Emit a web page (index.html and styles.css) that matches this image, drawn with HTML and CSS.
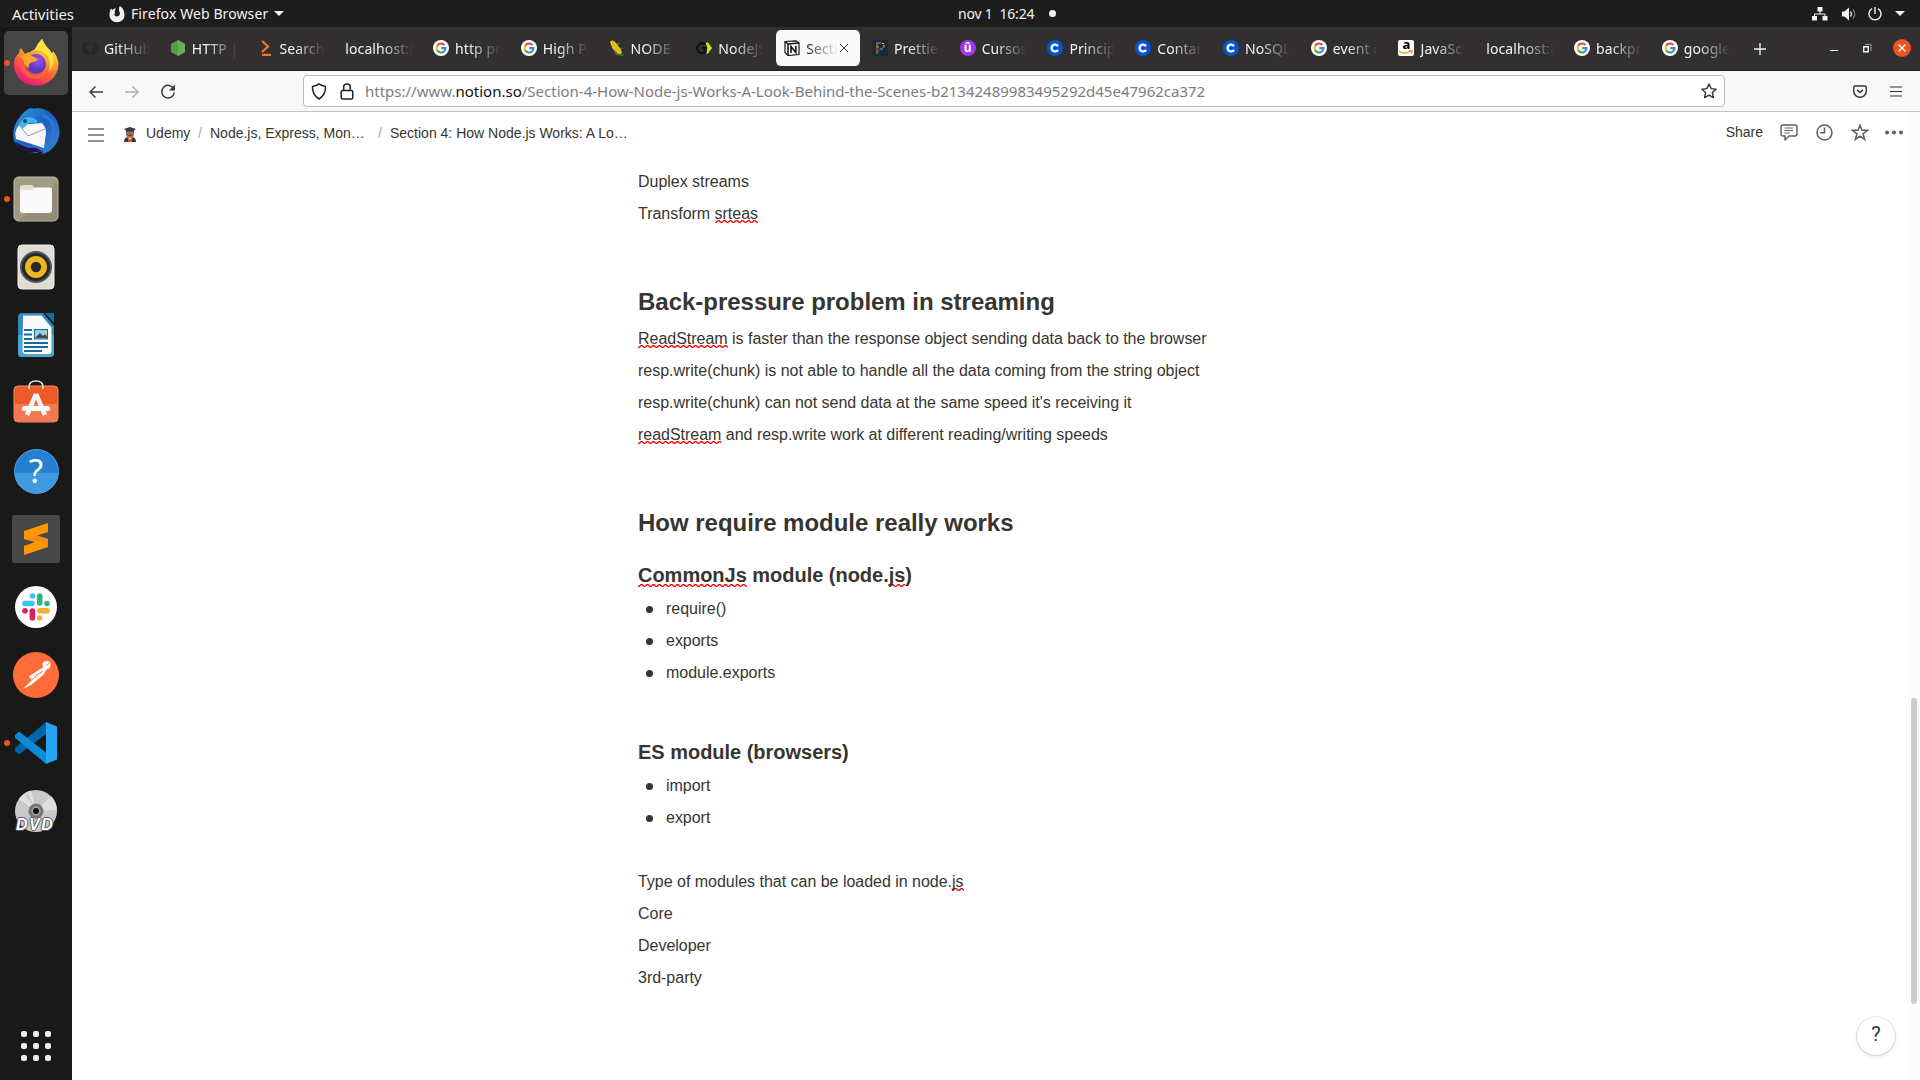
FILE: index.html
```html
<!DOCTYPE html>
<html lang="en">
<head>
<meta charset="utf-8">
<title>Section 4: How Node.js Works</title>
<link rel="stylesheet" href="styles.css">
</head>
<body>
<svg class="defs" width="0" height="0">
  <symbol id="google" viewBox="0 0 16 16"><circle cx="8" cy="8" r="8" fill="#fff"/><g fill="none" stroke-width="2.1"><path d="M4.2 5.7A4.5 4.5 0 0 1 11.3 4.9" stroke="#ea4335"/><path d="M4.2 10.3A4.5 4.5 0 0 1 4.2 5.7" stroke="#fbbc05"/><path d="M11 11.4A4.5 4.5 0 0 1 4.2 10.3" stroke="#34a853"/><path d="M8.2 8.1H12.5A4.5 4.5 0 0 1 11 11.4" stroke="#4285f4"/></g></symbol>
  <symbol id="coursera" viewBox="0 0 16 16"><circle cx="8" cy="8" r="8" fill="#0056d2"/><path d="M10.900 6.300A3.400 3.400 0 1 0 10.900 9.800" fill="none" stroke="#fff" stroke-width="2.3"/></symbol>
</svg>

<header class="topbar">
  <div class="top-left">
    <span class="activities">Activities</span>
    <svg width="16" height="18" viewBox="0 0 16 18"><path d="M2 3.5 3.5 5C5 3.6 6.4 3.4 7 3.8 5.6 5 5.2 7 6.2 7.4 5 8.400 5 11 7.800 11.500 10.500 11.500 11.500 9 10.500 6.800 9.800 5.300 9.500 3 11 1 13.500 3 15.500 5.500 15.500 10 15.500 14.500 12 17.200 8 17.200 3.500 17.200.5 14 .5 10 .5 7 1 5 2 3.500Z" fill="#f2f2f2"/></svg>
    <span class="app-name">Firefox Web Browser</span>
    <i class="caret"></i>
  </div>
  <div class="top-clock"><span>nov 1&nbsp; 16:24</span><i class="notice"></i></div>
  <div class="top-right">
    <svg width="16" height="14" viewBox="0 0 16 14" fill="#f2f2f2"><path d="M5.500 0h5v4.500h-5zM0 9h5v4.500H0zM10.500 9h5v4.500h-5z"/><path d="M8 4v3M2.500 9.500V7h10.500v2.500" fill="none" stroke="#f2f2f2"/></svg>
    <svg width="16" height="14" viewBox="0 0 16 14"><path d="M1 4.500h2.500L8 .500v13L3.500 9.500H1z" fill="#f2f2f2"/><path d="M9.500 4.500q2 2.500 0 5" fill="none" stroke="#ddd" stroke-width="1.300"/><path d="M12 2.500q3.500 4.500 0 9" fill="none" stroke="#777" stroke-width="1.300"/></svg>
    <svg width="14" height="14" viewBox="0 0 14 14" fill="none" stroke="#f2f2f2" stroke-width="1.400"><path d="M4 1.700a6 6 0 1 0 6 0M7 0v7"/></svg>
    <i class="caret"></i>
  </div>
</header>

<div class="desktop">
  <nav class="dock">
    <div class="dock-item focused running">
      <svg width="46" height="48" viewBox="0 0 46 48">
        <defs><linearGradient id="ff" x1=".8" y1="0" x2=".3" y2="1"><stop offset="0" stop-color="#fff44f"/><stop offset=".35" stop-color="#ffb02e"/><stop offset=".65" stop-color="#ff5a36"/><stop offset="1" stop-color="#e31587"/></linearGradient><radialGradient id="ffp" cx=".6" cy=".3"><stop offset="0" stop-color="#a04df5"/><stop offset="1" stop-color="#5a3bc0"/></radialGradient></defs>
        <path d="M8 9 12 15Q14 13 17 13L22 10Q24 5 29 0 31 6 36 10 38 12 39 15L40 12Q45 18 45.500 25C45 38 35 46.500 23 46.500S1 38 1 25Q1 18 6 14Q6 11 8 9Z" fill="url(#ff)"/>
        <path d="M10 24Q11 34 22 36 33 36 36 27 36 37 25 40 12 40 8 30Z" fill="#ff6b32" opacity=".65"/>
        <circle cx="23" cy="25" r="10" fill="url(#ffp)"/>
        <path d="M7 17Q14 13 19 17L25 20Q23 23 18 23.500 15 25 16 29 11 27 11 22Z" fill="#ffa529"/><path d="M22 11Q31 11 35 18 39 26 35 33 43 26 40 15 35 11 29 0 24 5 22 11Z" fill="#ffe044"/>
      </svg>
    </div>
    <div class="dock-item">
      <svg width="48" height="48" viewBox="0 0 48 48">
        <defs><linearGradient id="tb" x1="0" y1="0" x2="1" y2="1"><stop offset="0" stop-color="#2f9be0"/><stop offset=".5" stop-color="#1c5fbd"/><stop offset="1" stop-color="#3989d8"/></linearGradient></defs>
        <path d="M18 1Q22 2 25 1C39 2 47 12 47.500 24 48 36 39 45 30 47L31 44 24 46Q8 45 2 34 -1 20 8 10Q12 4 18 1Z" fill="url(#tb)"/>
        <path d="M3 34Q12 42 24 41L30 44Q10 49 3 34Z" fill="#20104d"/>
        <path d="M7 18 30 16Q34 20 34 26L32 41 4 32Q2 24 7 18Z" fill="#f8f8fa"/><path d="M7 18 16 29 33 22" fill="none" stroke="#9b9ba0"/>
        <path d="M7 17Q12 8 21 11 28 14 24 16 17 14 14 19L10 22Z" fill="#42b8ee"/><circle cx="13" cy="14" r="2" fill="#174377"/><path d="M30 8Q42 12 42 24 41 34 34 42" fill="none" stroke="#2d78d0" stroke-width="3"/>
      </svg>
    </div>
    <div class="dock-item running">
      <svg width="46" height="46" viewBox="0 0 46 46"><rect x="1" y="1" width="44" height="44" rx="4.500" fill="#a29b84" stroke="#c5bfa9"/><path d="M44.500 6 6 44.500H40a4.500 4.500 0 0 0 4.500-4.500z" fill="#948d77"/><path d="M7 12q0-3 3-3h9l3 3h5v8H7z" fill="#e2ded2"/><path d="M7 16q0-2 2-2h10l3-2.500h15q2 0 2 2V34q0 3-3 3H10q-3 0-3-3z" fill="#fafafa"/></svg>
    </div>
    <div class="dock-item">
      <svg width="38" height="46" viewBox="0 0 38 46"><rect x="1" y="1" width="36" height="44" rx="4" fill="#e2ddd3" stroke="#f1eee8"/><circle cx="19" cy="23" r="16" fill="#535560"/><circle cx="19" cy="23" r="14" fill="#24262e"/><circle cx="19" cy="23" r="11" fill="#ecb719"/><circle cx="19" cy="23" r="5.200" fill="#282828"/></svg>
    </div>
    <div class="dock-item">
      <svg width="38" height="46" viewBox="0 0 38 46"><path d="M5 1h21l11 13v27q0 4-4 4H5q-4 0-4-4V5q0-4 4-4z" fill="#3488bb"/><path d="M1 23h36v18q0 4-4 4H5q-4 0-4-4z" fill="#4ba4d2"/><path d="M6 3.500h18.500l10 12V39q0 3-3 3h-22q-4 0-4-3z" fill="#fafafa"/><path d="M28 1h9v10z" fill="#146c9f"/><path d="M7 18h8M7 22.500h8M7 27h8M7 31h24M7 35h24M7 39h18" stroke="#1769a0" stroke-width="1.800"/><rect x="17.500" y="17.500" width="13" height="9.500" fill="#8bd2f2" stroke="#1769a0"/><path d="m18 26 5-5 3 3 2-2 3 4z" fill="#444"/><circle cx="28" cy="20" r="1.500" fill="#e5c84e"/></svg>
    </div>
    <div class="dock-item">
      <svg class="software" width="46" height="46" viewBox="0 0 46 46"><rect x="1" y="8" width="44" height="36" rx="4" fill="#ef5a27" stroke="#f48b66"/><path d="M1 26h44v14q0 4-4 4H5q-4 0-4-4z" fill="#f27a50"/><path d="M16 11V9q0-6 7-6t7 6v2" fill="none" stroke="#eee1bc" stroke-width="1.600"/><path d="M23 16 14 37M23 16l9 21" stroke="#faf4f0" stroke-width="4.600"/><rect x="9" y="28" width="28" height="5" rx="2.500" fill="#fff"/></svg>
    </div>
    <div class="dock-item"><div class="help-app">?</div></div>
    <div class="dock-item">
      <svg width="48" height="48" viewBox="0 0 48 48"><rect width="48" height="48" rx="2.500" fill="#484848"/><path d="M12 16 36 8v9l-11 3.500L36 24v8L12 40v-9l11-4-11-3z" fill="#ff9800"/><path d="m12 24 11 3 4-1.500L36 32V24l-11-3.500z" fill="#f28b13"/></svg>
    </div>
    <div class="dock-item">
      <svg width="42" height="42" viewBox="0 0 42 42"><circle cx="21" cy="21" r="21" fill="#fff"/><g stroke-width="5.600" stroke-linecap="round"><path d="M10 17.500h7M17.500 10h.01" stroke="#36c5f0"/><path d="M24.700 10v7M32 17.500h.01" stroke="#2eb67d"/><path d="M25 24.700h7M24.700 32h.01" stroke="#ecb22e"/><path d="M17.400 25v7M10 24.700h.01" stroke="#e01e5a"/></g></svg>
    </div>
    <div class="dock-item">
      <svg width="46" height="46" viewBox="0 0 46 46"><circle cx="23" cy="23" r="23" fill="#ff6c37"/><circle cx="33.500" cy="13" r="4" fill="#fff"/><path d="M31 15 19 23l-1 3 12-8zM32 18 19 28 10 37l8-4 11-9q4-4 3-6z" fill="#fff"/><path d="M17 26 33 16" stroke="#fff" stroke-width="4"/><path d="m21 25 9-6" stroke="#ff6c37"/><path d="m33.500 13 3-2" stroke="#ff6c37"/></svg>
    </div>
    <div class="dock-item running">
      <svg width="42" height="42" viewBox="0 0 42 42"><path d="M31 0 0 26v3l4 3.500L31 12z" fill="#0065a9"/><path d="m4 9.500-4 3.800v2.500L31 42V30.500z" fill="#0b8bd7"/><path d="m31 0 11 4.500v33L31 42z" fill="#24a5f5"/></svg>
    </div>
    <div class="dock-item">
      <div class="dvd"><svg width="42" height="42" viewBox="0 0 42 42"><circle cx="21" cy="21" r="21" fill="#c9c9c9"/><path d="M21 21 4 9A21 21 0 0 1 16 .5z" fill="#e5dfe6"/><path d="M21 21 9 4l4-2z" fill="#dcc7dc"/><path d="m21 21 15-15a21 21 0 0 1 6 14z" fill="#dedede"/><circle cx="21" cy="21" r="7.500" fill="#777"/><circle cx="21" cy="21" r="4.500" fill="#a2a2a2"/><circle cx="21" cy="21" r="3" fill="#111"/></svg><b>DVD</b></div>
    </div>
    <div class="apps-grid"><i></i><i></i><i></i><i></i><i></i><i></i><i></i><i></i><i></i></div>
  </nav>

  <main class="browser">
    <div class="tabstrip">
      <div class="tab"><svg class="fav" viewBox="0 0 16 16"><path d="M6 15v-3Q3 12.500 2.500 10.500M6 12Q3 11 3 8 3 6 4 5V3l2 1q2-.5 4 0l2-1v2q1 1 1 3 0 3-3 4v3M4 2A7.300 7.300 0 0 0 5 14.500M11 14.500A7.300 7.300 0 0 0 12 2" fill="none" stroke="#24292e" stroke-width="1.800"/></svg><span>GitHub</span></div>
      <div class="tab"><svg class="fav" viewBox="0 0 16 16"><path d="m8 0 7 4v8l-7 4-7-4V4z" fill="#539e43"/><path d="m8 0 7 4v8L8 16z" fill="#6cad57"/></svg><span>HTTP |</span></div>
      <div class="tab"><svg class="fav" viewBox="0 0 16 16"><path d="m4 1 6 5.500-6 5.500M4 15h9" stroke="#f37626" stroke-width="2.300" fill="none"/></svg><span>Search</span></div>
      <div class="tab"><span>localhost:8</span></div>
      <div class="tab"><svg class="fav"><use href="#google"/></svg><span>http pr</span></div>
      <div class="tab"><svg class="fav"><use href="#google"/></svg><span>High Pe</span></div>
      <div class="tab"><svg class="fav" viewBox="0 0 16 16"><path d="M1 5Q5 10 7 15l8 1-4-5 3-3-5-1 2-5-5 2z" fill="#467b25"/><path d="M1 2Q3-1 6 2l6 8q2 4-2 4L4 9z" fill="#f4c32c"/><path d="m3 2 8 10M2 5l6 6" stroke="#cb8d12" stroke-width=".7"/></svg><span>NODE</span></div>
      <div class="tab"><svg class="fav" viewBox="0 0 16 16"><path d="M9.500 2.500h2.500L16 8l-4 5.500H9.500L11.500 8z" fill="#c6e72c"/><path d="M9 4A5 5 0 1 0 9.500 12V8H6" fill="none" stroke="#111" stroke-width="2.300"/></svg><span>NodeJS</span></div>
      <div class="tab active"><svg class="fav" viewBox="0 0 16 16"><path d="M1 1.500 12 .8 15 3v11.500l-11 1L1 12.500z" fill="#fff" stroke="#111" stroke-width="1.200"/><path d="M1 1.500 4 4l11-1M4 4v11" stroke="#111" fill="none" stroke-width="1.500"/><path d="M7 13V6.500l4.800 6V5.800" stroke="#111" fill="none" stroke-width="1.600"/></svg><span>Secti</span><svg class="tab-close" viewBox="0 0 10 10"><path d="m1 1 8 8M9 1 1 9" stroke="#333"/></svg></div>
      <div class="tab"><svg class="fav" viewBox="0 0 16 16"><rect width="16" height="16" rx="1" fill="#1a2b34"/><path d="M4 3h5M4 5h2" stroke="#c188c1" stroke-width="1.200"/><path d="M10 3.500h2M4 7h3" stroke="#f7ba3e" stroke-width="1.200"/><path d="M11 5.500h2M7.500 9H11" stroke="#56b3b4" stroke-width="1.200"/><path d="M4 9h2M4 11h3M10.500 7H13" stroke="#ea5e5e" stroke-width="1.200"/><path d="M4 13h2" stroke="#56b3b4"/></svg><span>Prettie</span></div>
      <div class="tab"><b class="fav udemy">û</b><span>Cursos</span></div>
      <div class="tab"><svg class="fav"><use href="#coursera"/></svg><span>Princip</span></div>
      <div class="tab"><svg class="fav"><use href="#coursera"/></svg><span>Contai</span></div>
      <div class="tab"><svg class="fav"><use href="#coursera"/></svg><span>NoSQL</span></div>
      <div class="tab"><svg class="fav"><use href="#google"/></svg><span>event c</span></div>
      <div class="tab"><b class="fav amazon">a<svg viewBox="0 0 16 5"><path d="M1 1q6 4 12 0M11 .5l3 0-.5 3" fill="none" stroke="#f90" stroke-width="1.500"/></svg></b><span>JavaSc</span></div>
      <div class="tab"><span>localhost:8</span></div>
      <div class="tab"><svg class="fav"><use href="#google"/></svg><span>backpr</span></div>
      <div class="tab"><svg class="fav"><use href="#google"/></svg><span>google</span></div>
      <svg class="new-tab" width="12" height="12" viewBox="0 0 12 12"><path d="M6 0v12M0 6h12" stroke="#f5f5f5" stroke-width="1.300"/></svg>
      <div class="window-buttons">
        <svg width="8" height="12" viewBox="0 0 8 12"><path d="M0 8.500h8" stroke="#fff"/></svg>
        <svg width="9" height="9" viewBox="0 0 9 9" fill="none"><path d="M.750 2.750h4.500v5h-4.500z" stroke="#fff" stroke-width="1.300"/><path d="M2 .500h6V7" stroke="#9a9a9a"/></svg>
        <i class="close"><svg width="8" height="8" viewBox="0 0 8 8"><path d="m.5.5 7 7M7.500.5l-7 7" stroke="#fff" stroke-width="1.300"/></svg></i>
      </div>
    </div>

    <div class="toolbar">
      <div class="nav-buttons">
        <svg width="14" height="12" viewBox="0 0 14 12"><path d="M14 6H1M6.500.500 1 6l5.500 5.500" fill="none" stroke="#3a3a3f" stroke-width="1.400"/></svg>
        <svg width="14" height="12" viewBox="0 0 14 12"><path d="M0 6h13M7.500.500 13 6l-5.500 5.500" fill="none" stroke="#adadad" stroke-width="1.400"/></svg>
        <svg width="16" height="16" viewBox="0 0 16 16"><path d="M13.500 4.500A6.300 6.300 0 1 0 14.300 8.500" fill="none" stroke="#3a3a3f" stroke-width="1.500"/><path d="M15 .500V6.500H9z" fill="#3a3a3f"/></svg>
      </div>
      <div class="urlbar">
        <svg width="16" height="17" viewBox="0 0 16 17"><path d="M8 1Q11 2.700 14.500 3.500q.5 8-6.500 12.500Q1 11.500 1.500 3.500 5 2.700 8 1z" fill="none" stroke="#222" stroke-width="1.500" stroke-linejoin="round"/></svg>
        <svg width="14" height="17" viewBox="0 0 14 17" fill="none" stroke="#222" stroke-width="1.500"><rect x="1.200" y="7.500" width="11.600" height="8.500" rx="1.500"/><path d="M3.700 7.500V4q0-3 3.300-3t3.300 3v3.500"/></svg>
        <span class="url">https://www.<em>notion.so</em>/Section-4-How-Node-js-Works-A-Look-Behind-the-Scenes-b21342489983495292d45e47962ca372</span>
        <svg width="16" height="16" viewBox="0 0 16 16"><path d="m8 1 2.100 4.600 5 .6-3.700 3.400 1 5L8 12.100l-4.400 2.500 1-5L.9 6.200l5-.6z" fill="none" stroke="#333" stroke-width="1.400" stroke-linejoin="round"/></svg>
      </div>
      <div class="tool-right">
        <svg width="14" height="13" viewBox="0 0 14 13" fill="none" stroke="#333" stroke-width="1.400"><path d="M2.200 1h9.600q1.500 0 1.500 1.500V6a6.300 6.300 0 0 1-12.600 0V2.500Q.700 1 2.200 1zM4 4.700l3 2.800 3-2.800"/></svg>
        <svg width="12" height="11" viewBox="0 0 12 11"><path d="M0 1h12M0 5.500h12M0 10h12" stroke="#333" stroke-width="1.200"/></svg>
      </div>
    </div>

    <section class="page">
      <div class="notion-bar">
        <svg class="menu" width="16" height="14" viewBox="0 0 16 14"><path d="M0 1h16M0 7h16M0 13h16" stroke="#6b6a67" stroke-width="1.700"/></svg>
        <svg class="student" width="12" height="15" viewBox="0 0 12 15"><path d="M2 4h8v4q-1 3-4 3T2 8z" fill="#9c6b48"/><path d="m6 0 6 2-2 1.500v1H2v-1L0 2zM0 15q0-4 3-5l3 3 3-3q3 1 3 5z" fill="#35393d"/><path d="M4 10.500 6 13l2-2.500V15H4z" fill="#e0522e"/><path d="M4.500 8.500h3" stroke="#5d321d"/></svg>
        <span class="crumb c1">Udemy</span><span class="slash">/</span>
        <span class="crumb c2">Node.js, Express, Mon…</span><span class="slash">/</span>
        <span class="crumb">Section 4: How Node.js Works: A Lo…</span>
        <div class="page-actions">
          <span>Share</span>
          <svg width="18" height="17" viewBox="0 0 18 17" fill="none" stroke="#5f5e5b" stroke-width="1.400"><path d="M3 1h12q2 0 2 2v7q0 2-2 2H9l-4 4v-4H3q-2 0-2-2V3q0-2 2-2z" stroke-linejoin="round"/><path d="M4.500 4h8.500M4.500 6.500h8.500M4.500 9h5.500" stroke-width="1"/></svg>
          <svg width="17" height="17" viewBox="0 0 17 17" fill="none" stroke="#5f5e5b" stroke-width="1.500"><circle cx="8.500" cy="8.500" r="7.500"/><path d="M8.500 3.500v5.200H4.200"/></svg>
          <svg width="18" height="17" viewBox="0 0 18 17"><path d="m9 1.300 1.900 5h5.600l-4.500 3.500 1.700 5.700L9 12.200l-4.700 3.300L6 9.800 1.500 6.300h5.600z" fill="none" stroke="#5f5e5b" stroke-width="1.500"/></svg>
          <svg width="18" height="5" viewBox="0 0 18 5" fill="#5f5e5b"><circle cx="2" cy="2.500" r="2"/><circle cx="9" cy="2.500" r="2"/><circle cx="16" cy="2.500" r="2"/></svg>
        </div>
      </div>
      <article class="doc">
        <p>Duplex streams</p>
        <p>Transform <u>srteas</u></p>
        <p></p>
        <h2>Back-pressure problem in streaming</h2>
        <p><u>ReadStream</u> is faster than the response object sending data back to the browser</p>
        <p>resp.write(chunk) is not able to handle all the data coming from the string object</p>
        <p>resp.write(chunk) can not send data at the same speed it's receiving it</p>
        <p><u>readStream</u> and resp.write work at different reading/writing speeds</p>
        <p></p>
        <h2>How require module really works</h2>
        <h3><u>CommonJs</u> module (node.<u>js</u>)</h3>
        <ul><li>require()</li><li>exports</li><li>module.exports</li></ul>
        <p></p>
        <h3>ES module (browsers)</h3>
        <ul><li>import</li><li>export</li></ul>
        <p></p>
        <p>Type of modules that can be loaded in node.<u>js</u></p>
        <p>Core</p>
        <p>Developer</p>
        <p>3rd-party</p>
      </article>
      <div class="scrollbar"><i></i></div>
      <div class="help">?</div>
    </section>
  </main>
</div>
</body>
</html>
```
FILE: styles.css
```css
* { box-sizing: border-box; }
body { margin: 0; width: 1920px; height: 1080px; overflow: hidden; display: flex; flex-direction: column; background: #fff; font-family: "Noto Sans", sans-serif; font-size: 14px; }
svg { display: block; flex: none; }
.defs { position: absolute; }

/* system bar */
.topbar { height: 27px; flex: none; background: #1d1d1d; color: #f2f2f2; display: grid; grid-template-columns: 958px 1fr auto; align-items: center; white-space: nowrap; line-height: 26px; }
.top-left { display: flex; align-items: center; padding-left: 12px; }
.activities { width: 97px; font-size: 15px; letter-spacing: -.05px; }
.app-name { width: 138px; margin: 0 6px; letter-spacing: .1px; }
.caret { border: 5px solid transparent; border-top: 5px solid #f2f2f2; border-bottom: 0; }
.top-left .caret { margin-left: -1px; }
.top-clock { display: flex; align-items: center; }
.top-clock span { width: 91px; letter-spacing: -.2px; }
.notice { width: 7px; height: 7px; border-radius: 50%; background: #f2f2f2; }
.top-right { display: flex; align-items: center; gap: 13px; padding-right: 15px; }
.top-right svg:nth-child(3) { margin-left: -2px; }

.desktop { flex: 1; display: flex; min-height: 0; }

/* dock */
.dock { width: 72px; flex: none; background: #191919; display: flex; flex-direction: column; align-items: center; gap: 4px; padding: 4px 0 19px; }
.dock-item { width: 64px; height: 64px; flex: none; display: flex; align-items: center; justify-content: center; border-radius: 5px; position: relative; }
.focused { background: #454545; }
.running::before { content: ""; position: absolute; left: 0; top: 29px; width: 6px; height: 6px; border-radius: 50%; background: #e95420; }
.software { margin-bottom: 5px; }
.help-app { width: 45px; height: 45px; border-radius: 50%; background: linear-gradient(#2380d2 54%, #3e9be1 54%); border: 1px solid #52a5e4; color: #fff; font: 33px/42px "Noto Sans", sans-serif; text-align: center; }
.dvd { position: relative; }
.dvd b { position: absolute; left: 1px; bottom: -1px; font: italic bold 16px/17px "Liberation Sans", sans-serif; color: #fff; letter-spacing: 1.5px; text-shadow: 1px 0 #555, -1px 0 #555, 0 1px #555, 0 -1px #555; }
.apps-grid { margin-top: auto; display: grid; grid-template-columns: repeat(3, 6px); gap: 6px; }
.apps-grid i { width: 6px; height: 6px; border-radius: 2px; background: #eee; }

/* browser chrome */
.browser { flex: 1; min-width: 0; display: flex; flex-direction: column; }
.tabstrip { height: 44px; flex: none; background: #322f30; border-bottom: 1px solid #1f1c1e; display: flex; align-items: center; padding-bottom: 1px; color: #f4f4f4; }
.tab { width: 87.77px; height: 36px; flex: none; display: flex; align-items: center; gap: 6px; padding: 0 8px; border: 0 solid transparent; border-width: 0 2px; background-clip: padding-box; border-radius: 6px; }
.tab span { flex: 1; min-width: 0; overflow: hidden; white-space: nowrap; line-height: 22px; padding-top: 2px; letter-spacing: .1px; -webkit-mask-image: linear-gradient(to left, transparent 0, #000 32px); mask-image: linear-gradient(to left, transparent 0, #000 32px); }
.fav { width: 16px; height: 16px; flex: none; }
.active { background-color: #f9f9fa; color: #222; }
.tab-close { width: 10px; height: 10px; margin: 0 3px 0 -5px; }
.udemy { border-radius: 50%; background: #a435f0; color: #fff; text-align: center; font-size: 12px; line-height: 15px; }
.amazon { border-radius: 2px; background: #fff; color: #000; text-align: center; font-size: 13px; line-height: 9px; }
.amazon svg { margin-top: 1px; }
.new-tab { margin: 1px 0 0 14px; }
.window-buttons { margin-left: auto; display: flex; align-items: center; gap: 25px; padding-right: 9px; }
.close { width: 18px; height: 18px; margin-left: -4px; border-radius: 50%; background: #e95420; display: flex; align-items: center; justify-content: center; }

.toolbar { height: 41px; flex: none; background: #f8f8f8; border-bottom: 1px solid #c4c4c4; display: flex; align-items: center; }
.nav-buttons { width: 231px; display: flex; align-items: center; gap: 22px; padding-left: 17px; }
.nav-buttons svg:last-child { margin-left: -1px; }
.nav-buttons svg { margin-top: 1px; }
.urlbar { width: 1422px; height: 32px; background: #fff; border: 1px solid #bbb; border-radius: 4px; display: flex; align-items: center; padding: 0 7px; }
.urlbar svg:nth-child(2) { margin-left: 13px; }
.url { flex: 1; padding-left: 11px; font-size: 15px; line-height: 22px; color: #7c7c7c; white-space: nowrap; }
.url em { font-style: normal; color: #111; }
.tool-right { margin-left: auto; display: flex; align-items: center; gap: 23px; padding-right: 18px; }

/* page */
.page { flex: 1; position: relative; background: #fff; color: #37352f; font-family: "Liberation Sans", Arial, sans-serif; }
.notion-bar { height: 45px; display: flex; align-items: center; padding: 0 17px 3px 16px; font-size: 14px; white-space: nowrap; }
.menu { margin-top: 4px; }
.student { margin: 2px 10px 0 20px; }
.c1 { width: 45px; }
.c2 { width: 161px; }
.slash { width: 12px; margin-left: 7px; color: #a9a8a5; }
.page-actions { margin-left: auto; display: flex; align-items: center; gap: 18px; padding-bottom: 1px; }
.page-actions span { margin: -2px -1px 0 0; }
.page-actions svg:last-child { margin-left: -2px; }
.doc { margin-left: 566px; padding-top: 9px; font-size: 16px; letter-spacing: -.02px; }
p, h2, h3, ul { margin: 0; }
p, li { height: 32px; line-height: 32px; }
h2 { height: 61px; padding-top: 24px; font-size: 24px; line-height: 31px; }
h3 { height: 49px; padding-top: 18px; font-size: 20px; line-height: 26px; }
ul { list-style: none; padding: 0 0 0 8px; }
li { display: flex; align-items: center; gap: 13px; }
li::before { content: ""; width: 7px; height: 7px; border-radius: 50%; background: #37352f; }
u { text-decoration: none; padding-bottom: 1px; background: url("data:image/svg+xml,%3Csvg xmlns='http://www.w3.org/2000/svg' width='6' height='3'%3E%3Cpath d='M-1 2.400H1L3 .600H4L6 2.400' fill='none' stroke='red' stroke-width='1.400'/%3E%3C/svg%3E") repeat-x left bottom; }
.scrollbar { position: absolute; right: 0; top: 0; bottom: 0; width: 12px; background: #fcfcfc; }
.scrollbar i { position: absolute; left: 3px; top: 586px; width: 6px; height: 306px; border-radius: 3px; background: #cdcdcd; }
.help { position: absolute; right: 25px; bottom: 25px; width: 38px; height: 38px; border-radius: 50%; background: #fff; box-shadow: 0 0 0 1px rgba(15,15,15,.1), 0 2px 4px rgba(15,15,15,.1); text-align: center; font: 20px/35px Roboto, sans-serif; }
```
